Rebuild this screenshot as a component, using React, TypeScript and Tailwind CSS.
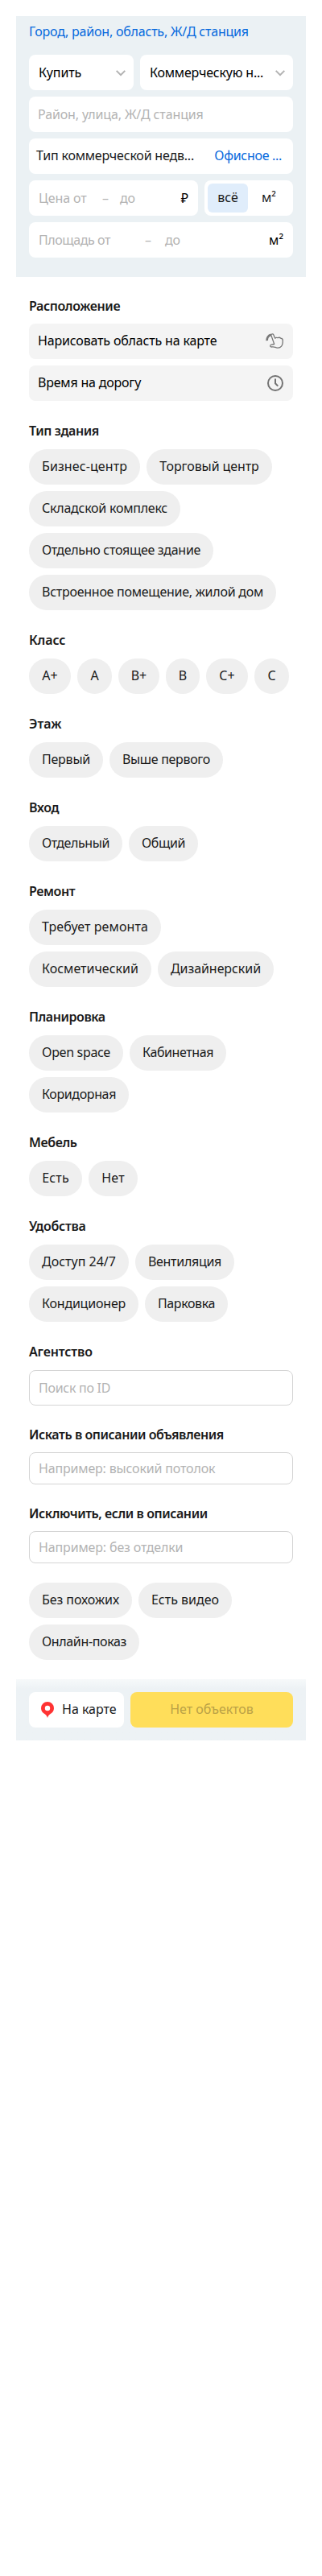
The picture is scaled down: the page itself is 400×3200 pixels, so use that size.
import type { ReactNode } from "react";

type ChipData = { label: string; size: string };

function Chip({ label, size }: ChipData) {
  return (
    <button className={`flex h-11 items-center justify-center rounded-full bg-[#efefef] pb-0.5 whitespace-nowrap ${size}`}>
      {label}
    </button>
  );
}

function Chips({ items, className = "" }: { items: ChipData[]; className?: string }) {
  return (
    <div className={`flex flex-wrap gap-2 ${className}`}>
      {items.map((c) => (
        <Chip key={c.label} {...c} />
      ))}
    </div>
  );
}

function Heading({ children, className }: { children: ReactNode; className: string }) {
  return <h3 className={`h-5 text-base leading-5 font-semibold whitespace-nowrap ${className}`}>{children}</h3>;
}

function Chevron() {
  return (
    <svg width="12" height="8" viewBox="0 0 12 8" fill="none" stroke="#b2b2b2" strokeWidth="2" className="mt-0.5 shrink-0">
      <path d="M0.7 0.9 6 6.2l5.3-5.3" />
    </svg>
  );
}

function DrawIcon() {
  return (
    <svg width="22" height="20" viewBox="0 0 22 20" fill="none" stroke="#777" strokeWidth="1.3" strokeLinejoin="round" strokeLinecap="round">
      <path d="M1.6 9.2C1.4 5.6 3.6 2.6 6.8 1.9" strokeWidth="2.8" strokeLinecap="butt" />
      <path d="M6.7 2.1C7.3.5 9.3.6 9.9 2l1.8 4.2c1-.9 2.3-1.1 3.4-.5 1.3-.7 2.7-.5 3.6.5 1.5.1 2.600 1.200 2.600 2.900 0 3.300-.1 5.400-1.700 7-1.300 1.500-4 2.300-6.300 1.700-1.900-.5-3.200-1.100-4.700-.9-1.400.2-2.600 0-2.900-.9-.2-.9.4-1.600 1.500-1.900.9-.2 2.200-.5 3.500-.6z" />
    </svg>
  );
}

function ClockIcon() {
  return (
    <svg width="20" height="20" viewBox="0 0 20 20" fill="none" stroke="#737373" strokeWidth="2">
      <circle cx="10" cy="10" r="9" />
      <path d="M10 4.500v5.800l3.300 3.300" />
    </svg>
  );
}

function PinIcon() {
  return (
    <svg width="16" height="20" viewBox="0 0 16 20" fill="#ff3333">
      <path fillRule="evenodd" d="M8 0a8 8 0 0 1 8 8c0 3.300-1.800 5.700-4.300 7C9.700 16.100 8.900 17.400 8 20c-.9-2.600-1.700-3.900-3.700-5C1.800 13.700 0 11.300 0 8a8 8 0 0 1 8-8zm0 4.800a3.200 3.200 0 1 0 0 6.400 3.200 3.200 0 0 0 0-6.400z" />
    </svg>
  );
}

const sections: { title: string; tracking: string; wrap?: string; items: ChipData[] }[] = [
  {
    title: "Тип здания",
    tracking: "tracking-[-0.4px]",
    items: [
      { label: "Бизнес-центр", size: "w-[138px] tracking-[0.1px]" },
      { label: "Торговый центр", size: "w-[156px] tracking-[-0.1px]" },
      { label: "Складской комплекс", size: "w-[188px] tracking-[-0.24px]" },
      { label: "Отдельно стоящее здание", size: "w-[229px] tracking-[-0.3px]" },
      { label: "Встроенное помещение, жилой дом", size: "w-[307px] tracking-[-0.26px]" },
    ],
  },
  {
    title: "Класс",
    tracking: "tracking-[-0.1px]",
    items: [
      { label: "A+", size: "w-[52px]" },
      { label: "A", size: "w-[43px]" },
      { label: "B+", size: "w-[51px]" },
      { label: "B", size: "w-[42px]" },
      { label: "C+", size: "w-[52px]" },
      { label: "C", size: "w-[43px]" },
    ],
  },
  {
    title: "Этаж",
    tracking: "tracking-normal",
    items: [
      { label: "Первый", size: "w-[92px] tracking-[-0.23px]" },
      { label: "Выше первого", size: "w-[141px] tracking-[-0.32px]" },
    ],
  },
  {
    title: "Вход",
    tracking: "tracking-[-0.3px]",
    items: [
      { label: "Отдельный", size: "w-[116px] tracking-[-0.39px]" },
      { label: "Общий", size: "w-[86px] tracking-[-0.4px]" },
    ],
  },
  {
    title: "Ремонт",
    tracking: "tracking-[-0.4px]",
    wrap: "pr-2",
    items: [
      { label: "Требует ремонта", size: "w-[164px] tracking-[0.1px]" },
      { label: "Косметический", size: "w-[152px]" },
      { label: "Дизайнерский", size: "w-[144px] tracking-[-0.07px]" },
    ],
  },
  {
    title: "Планировка",
    tracking: "tracking-[-0.45px]",
    items: [
      { label: "Open space", size: "w-[117px] tracking-[-0.36px]" },
      { label: "Кабинетная", size: "w-[120px] tracking-[-0.41px]" },
      { label: "Коридорная", size: "w-[124px] tracking-[-0.37px]" },
    ],
  },
  {
    title: "Мебель",
    tracking: "tracking-[-0.4px]",
    items: [
      { label: "Есть", size: "w-[66px] tracking-[0.2px]" },
      { label: "Нет", size: "w-[61px] tracking-[0.2px]" },
    ],
  },
  {
    title: "Удобства",
    tracking: "tracking-[-0.3px]",
    items: [
      { label: "Доступ 24/7", size: "w-[124px]" },
      { label: "Вентиляция", size: "w-[123px] tracking-[-0.3px]" },
      { label: "Кондиционер", size: "w-[136px] tracking-[-0.2px]" },
      { label: "Парковка", size: "w-[103px] tracking-[-0.39px]" },
    ],
  },
];

const extras: ChipData[] = [
  { label: "Без похожих", size: "w-[128px] tracking-[-0.07px]" },
  { label: "Есть видео", size: "w-[116px]" },
  { label: "Онлайн-показ", size: "w-[137px] tracking-[-0.36px]" },
];

export default function App() {
  return (
    <main className="min-h-[3200px] bg-white p-5 font-['Noto_Sans',sans-serif] text-base leading-5 text-[#1a1a1a]">
      <section className="flex h-[324px] flex-col gap-2 bg-[#ebf1f4] px-4 pt-[9px]">
        <a className="mb-[11px] h-5 whitespace-nowrap tracking-[-0.21px] text-[#0669dd]">Город, район, область, Ж/Д станция</a>
        <div className="flex h-11 shrink-0 gap-2 text-black">
          <button className="flex w-[130px] items-center justify-between rounded-lg bg-white pr-2.5 pl-3">
            <span className="tracking-[-0.1px]">Купить</span>
            <Chevron />
          </button>
          <button className="flex flex-1 items-center justify-between rounded-lg bg-white pr-2.5 pl-3">
            <span className="whitespace-nowrap tracking-[-0.2px]">Коммерческую н...</span>
            <Chevron />
          </button>
        </div>
        <div className="flex h-11 shrink-0 items-center rounded-lg bg-white px-[11px] tracking-[-0.13px] text-[#b3b3b3]">Район, улица, Ж/Д станция</div>
        <div className="flex h-11 shrink-0 items-center justify-between rounded-lg bg-white pr-3.5 pb-0.5 pl-[9px]">
          <span className="whitespace-nowrap tracking-[-0.2px]">Тип коммерческой недв...</span>
          <span className="whitespace-nowrap tracking-[-0.3px] text-[#0669dd]">Офисное ...</span>
        </div>
        <div className="flex h-11 shrink-0 gap-2">
          <div className="flex w-[210px] items-center rounded-lg bg-white pr-3 pl-3 text-[#b3b3b3]">
            <span className="w-[79px] tracking-[-0.1px]">Цена от</span>
            <span className="w-[22px]">–</span>
            <span className="flex-1 tracking-[-0.3px]">до</span>
            <span className="text-black">₽</span>
          </div>
          <div className="flex flex-1 rounded-lg bg-white p-1">
            <span className="flex w-[50px] items-center justify-center rounded-md bg-[#e0edfb] pb-0.5">всё</span>
            <span className="flex flex-1 items-center justify-center pb-0.5">м²</span>
          </div>
        </div>
        <div className="flex h-11 shrink-0 items-center rounded-lg bg-white px-3 text-[#b3b3b3]">
          <span className="w-[132px] tracking-[-0.43px]">Площадь от</span>
          <span className="w-[25px]">–</span>
          <span className="flex-1 tracking-[-0.3px]">до</span>
          <span className="text-black">м²</span>
        </div>
      </section>

      <section className="px-4 pt-[26px]">
        <Heading className="mb-3 tracking-[-0.4px]">Расположение</Heading>
        <div className="flex flex-col gap-2">
          <button className="flex h-11 items-center justify-between rounded-lg bg-[#f4f4f4] pr-3 pl-[11px] text-black">
            <span className="pb-0.5 tracking-[-0.17px]">Нарисовать область на карте</span>
            <DrawIcon />
          </button>
          <button className="flex h-11 items-center justify-between rounded-lg bg-[#f4f4f4] pr-3 pl-[11px] text-black">
            <span className="pb-0.5 tracking-[-0.2px]">Время на дорогу</span>
            <ClockIcon />
          </button>
        </div>

        {sections.map((s) => (
          <div key={s.title} className="pt-[27px]">
            <Heading className={`mb-[13px] ${s.tracking}`}>{s.title}</Heading>
            <Chips items={s.items} className={s.wrap} />
          </div>
        ))}

        <Heading className="mt-[27px] mb-[13px] tracking-[-0.15px]">Агентство</Heading>
        <div className="flex h-11 items-center rounded-lg border border-[#d4d4d4] px-[11px] tracking-[-0.28px] text-[#b3b3b3]">Поиск по ID</div>
        <Heading className="mt-[26px] mb-3 tracking-[-0.44px]">Искать в описании объявления</Heading>
        <div className="flex h-10 items-center rounded-lg border border-[#d4d4d4] px-[11px] tracking-[-0.17px] text-[#b3b3b3]">Например: высокий потолок</div>
        <Heading className="mt-[26px] mb-3 tracking-[-0.44px]">Исключить, если в описании</Heading>
        <div className="mb-6 flex h-10 items-center rounded-lg border border-[#d4d4d4] px-[11px] tracking-[-0.14px] text-[#b3b3b3]">Например: без отделки</div>
        <Chips items={extras} />
      </section>

      <footer className="mt-6 flex gap-2 bg-linear-to-b from-[#f6f9fa] to-[#edf2f5] to-[12px] px-4 py-4">
        <button className="flex h-11 w-[118px] items-center gap-2.5 rounded-lg bg-white pl-[15px]">
          <PinIcon />
          <span className="pb-0.5 whitespace-nowrap">На карте</span>
        </button>
        <button className="flex h-11 flex-1 items-center justify-center rounded-lg bg-[#ffde5a] pb-0.5 tracking-[-0.05px] text-[#baa146]">Нет объектов</button>
      </footer>
    </main>
  );
}
